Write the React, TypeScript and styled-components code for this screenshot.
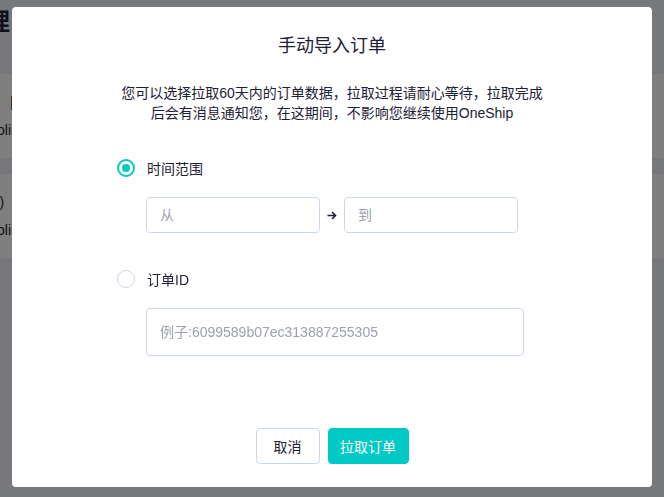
import React from "react";
import styled, { createGlobalStyle } from "styled-components";

const Global = createGlobalStyle`
  html, body { margin: 0; padding: 0; }
  body {
    font-family: "Liberation Sans", "Noto Sans CJK SC", sans-serif;
    background: #eef0f6;
    overflow: hidden;
  }
  * { box-sizing: border-box; }
`;

const TEAL = "#00c9c6";
const TEXT = "#1d2035";

const Page = styled.div`
  width: 664px;
  height: 497px;
  display: flex;
  flex-direction: column;
  background: #eef0f6;
  overflow: hidden;
`;

const PageHeader = styled.div`
  height: 74px;
  padding-top: 2px;
  margin-left: -38px;
  font-size: 24px;
  font-weight: 700;
  color: ${TEXT};
`;

const ListRow = styled.div<{ $gapAfter?: number }>`
  height: 85px;
  background: #ffffff;
  border-bottom: 1px solid #f3f3f3;
  margin-bottom: ${(p) => p.$gapAfter ?? 0}px;
  display: flex;
  flex-direction: column;
  padding-top: 20px;
  font-size: 14px;
  color: ${TEXT};
  gap: 12px;
  white-space: nowrap;
`;

const RowText = styled.span<{ $shift: number }>`
  margin-left: ${(p) => p.$shift}px;
`;

const Overlay = styled.div`
  position: fixed;
  inset: 0;
  background: rgba(0, 0, 0, 0.5);
  display: flex;
  justify-content: center;
  align-items: flex-start;
  padding-top: 7px;
`;

const Modal = styled.div`
  width: 640px;
  height: 480px;
  background: #ffffff;
  border-radius: 4px;
  display: flex;
  flex-direction: column;
  padding: 26px 0 23px;
  color: ${TEXT};
`;

const Title = styled.h2`
  margin: 0;
  font-size: 18px;
  line-height: 26px;
  font-weight: 400;
  text-align: center;
`;

const Intro = styled.p`
  margin: 24px 0 0;
  font-size: 14px;
  line-height: 20px;
  text-align: center;
`;

const Options = styled.div`
  display: flex;
  flex-direction: column;
  padding-left: 105px;
  margin-top: 35px;
`;

const OptionRow = styled.label<{ $top?: number }>`
  display: flex;
  align-items: center;
  gap: 12px;
  height: 20px;
  margin-top: ${(p) => p.$top ?? 0}px;
  font-size: 14px;
`;

const Radio = styled.span<{ $checked?: boolean }>`
  width: 18px;
  height: 18px;
  border-radius: 50%;
  border: ${(p) => (p.$checked ? `2px solid ${TEAL}` : "1px solid #cad6ea")};
  display: flex;
  align-items: center;
  justify-content: center;
  &::after {
    content: "";
    width: 8px;
    height: 8px;
    border-radius: 50%;
    background: ${TEAL};
    display: ${(p) => (p.$checked ? "block" : "none")};
  }
`;

const FieldRow = styled.div`
  display: flex;
  align-items: center;
  margin-top: 19px;
  margin-left: 29px;
`;

const Input = styled.input<{ $w: number; $h: number }>`
  width: ${(p) => p.$w}px;
  height: ${(p) => p.$h}px;
  border: 1px solid #cdd8ea;
  border-radius: 4px;
  padding: 0 13px;
  font-family: inherit;
  font-size: 14px;
  color: ${TEXT};
  outline: none;
  &::placeholder { color: #9ca1ad; }
`;

const ArrowBox = styled.span`
  width: 24px;
  display: flex;
  justify-content: center;
  align-items: center;
`;

const Footer = styled.div`
  margin-top: auto;
  display: flex;
  justify-content: center;
  gap: 8px;
`;

const Button = styled.button<{ $primary?: boolean; $w: number }>`
  width: ${(p) => p.$w}px;
  height: 36px;
  border-radius: 4px;
  font-family: inherit;
  font-size: 14px;
  border: 1px solid ${(p) => (p.$primary ? TEAL : "#cdd8ea")};
  background: ${(p) => (p.$primary ? TEAL : "#ffffff")};
  color: ${(p) => (p.$primary ? "#ffffff" : TEXT)};
  cursor: pointer;
`;

export default function App() {
  return (
    <>
      <Global />
      <Page>
        <PageHeader>管理</PageHeader>
        <ListRow $gapAfter={15}>
          <RowText $shift={10}>|</RowText>
          <RowText $shift={-3}>oline</RowText>
        </ListRow>
        <ListRow>
          <RowText $shift={-13}>(0) &nbsp;|</RowText>
          <RowText $shift={-3}>oline</RowText>
        </ListRow>
      </Page>
      <Overlay>
        <Modal>
          <Title>手动导入订单</Title>
          <Intro>
            您可以选择拉取60天内的订单数据，拉取过程请耐心等待，拉取完成
            <br />
            后会有消息通知您，在这期间，不影响您继续使用OneShip
          </Intro>
          <Options>
            <OptionRow>
              <Radio $checked />
              时间范围
            </OptionRow>
            <FieldRow>
              <Input $w={174} $h={36} placeholder="从" />
              <ArrowBox>
                <svg width="10" height="9" viewBox="0 0 10 9" fill="none">
                  <path d="M0.5 4.5H8.5M5 1L8.5 4.5L5 8" stroke="#1d2035" strokeWidth="1.6" />
                </svg>
              </ArrowBox>
              <Input $w={174} $h={36} placeholder="到" />
            </FieldRow>
            <OptionRow $top={36}>
              <Radio />
              订单ID
            </OptionRow>
            <FieldRow>
              <Input $w={378} $h={48} placeholder="例子:6099589b07ec313887255305" />
            </FieldRow>
          </Options>
          <Footer>
            <Button $w={64}>取消</Button>
            <Button $w={81} $primary>拉取订单</Button>
          </Footer>
        </Modal>
      </Overlay>
    </>
  );
}
